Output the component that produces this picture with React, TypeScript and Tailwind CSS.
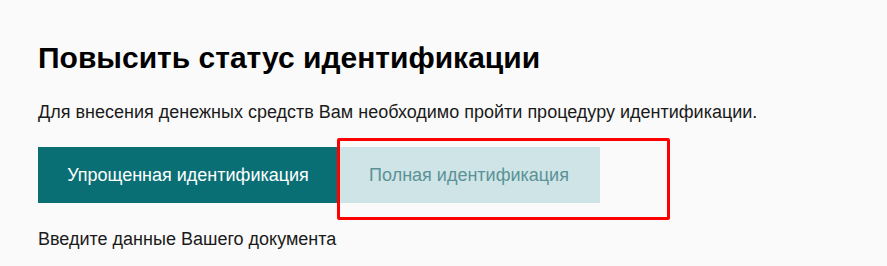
export default function App() {
  return (
    <div
      className="min-h-[266px] w-full bg-[#fafafa] px-[38px] pt-[40px] text-[#111]"
      style={{ fontFamily: '"Liberation Sans", Arial, sans-serif' }}
    >
      <h1 className="text-[30px] font-bold leading-[36px] text-black">Повысить статус идентификации</h1>
      <p className="mt-[25px] text-[18px] leading-[22px] text-[#1a1a1a]">
        Для внесения денежных средств Вам необходимо пройти процедуру идентификации.
      </p>
      <div className="relative mt-[24px] flex">
        <button className="h-[56px] w-[300px] bg-[#096f75] text-[18px] text-white">Упрощенная идентификация</button>
        <button className="h-[56px] w-[262px] bg-[#cfe4e6] text-[18px] text-[#5b9297]">Полная идентификация</button>
        <div className="pointer-events-none absolute left-[299px] top-[-9px] h-[82px] w-[333px] rounded-[2px] border-[3px] border-[#f00]" />
      </div>
      <p className="mt-[25px] text-[18px] leading-[22px] text-[#1a1a1a]">Введите данные Вашего документа</p>
    </div>
  );
}
